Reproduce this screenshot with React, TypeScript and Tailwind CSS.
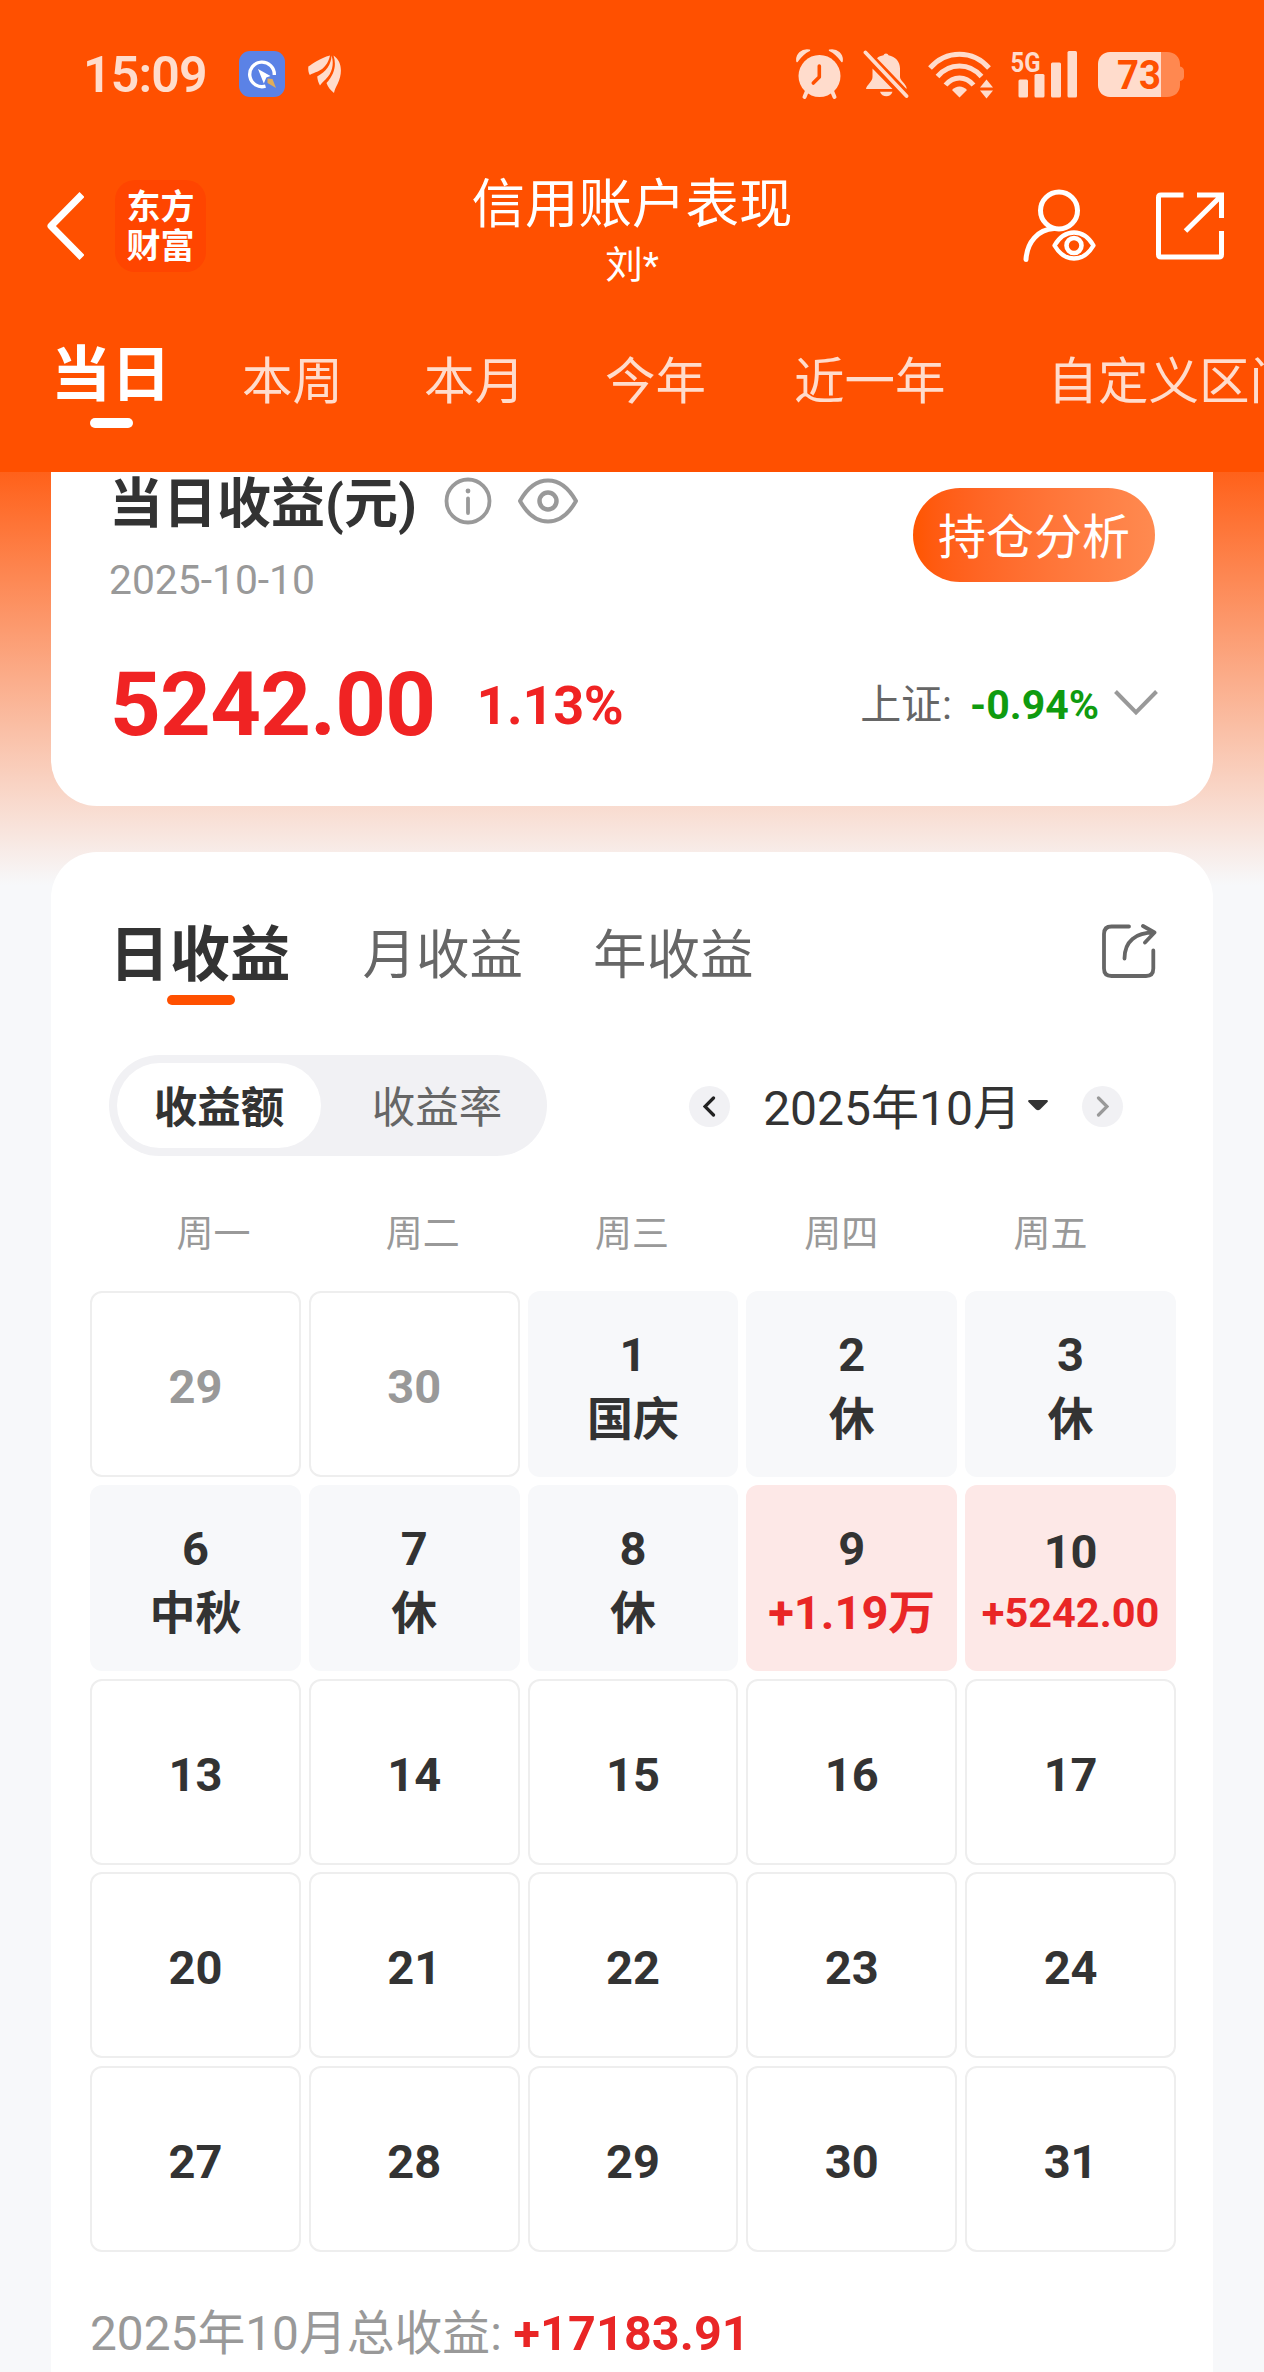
import clsx from "clsx";

type DayKind = "outside" | "normal" | "holiday" | "profit";

interface CalendarDay {
  day: number;
  kind: DayKind;
  label?: string;
}

const PERIOD_TABS = [
  { name: "本周", gap: "ml-[71px]" },
  { name: "本月", gap: "ml-[81px]" },
  { name: "今年", gap: "ml-[80px]" },
  { name: "近一年", gap: "ml-[88px]" },
  { name: "自定义区间", gap: "ml-[102px]" },
];

const WEEKDAYS = ["周一", "周二", "周三", "周四", "周五"];

const DAYS: CalendarDay[] = [
  { day: 29, kind: "outside" },
  { day: 30, kind: "outside" },
  { day: 1, kind: "holiday", label: "国庆" },
  { day: 2, kind: "holiday", label: "休" },
  { day: 3, kind: "holiday", label: "休" },
  { day: 6, kind: "holiday", label: "中秋" },
  { day: 7, kind: "holiday", label: "休" },
  { day: 8, kind: "holiday", label: "休" },
  { day: 9, kind: "profit", label: "+1.19万" },
  { day: 10, kind: "profit", label: "+5242.00" },
  ...[13, 14, 15, 16, 17, 20, 21, 22, 23, 24, 27, 28, 29, 30, 31].map(
    (day): CalendarDay => ({ day, kind: "normal" }),
  ),
];

function AlarmIcon() {
  return (
    <svg width="47" height="52" viewBox="0 0 47 52" fill="currentColor">
      <path d="M1 13.500C0 6 6 .8 13.500 2.200 8.500 4.500 4.500 8.500 1 13.500ZM46 13.500C47 6 41 .8 33.500 2.200c5 2.300 9 6.300 12.500 11.300Z" stroke="currentColor" strokeWidth="1.500" strokeLinejoin="round" />
      <circle cx="23.500" cy="28" r="21" />
      <path d="M11 43 8.500 49M36 43l2.500 6" stroke="currentColor" strokeWidth="4" strokeLinecap="round" />
      <path d="M23.300 18v11l-6 6" fill="none" stroke="#ff5000" strokeWidth="3.600" strokeLinecap="round" strokeLinejoin="round" />
    </svg>
  );
}

function MutedBellIcon() {
  return (
    <svg width="46" height="52" viewBox="0 0 46 52" fill="currentColor">
      {/* right half of the bell, cut along the slash */}
      <path d="M14 10.200c1.800-1.500 4-2.500 6.500-2.900a2.600 2.600 0 0 1 5 0C32.500 8.500 37 14 37 20.500V29c0 3.500 5.500 6.500 6.500 10.500V41Z" />
      <path d="M9.500 20.500V29c0 4.500-6 8-6.500 12H29.500L9.500 20.500Z" />
      <path d="M17 43.800h12.500c-1 3.200-3.500 4.500-6.200 4.500s-5.300-1.300-6.300-4.500Z" />
      <path d="M2.500 4.500 43.500 48" stroke="currentColor" strokeWidth="3.800" strokeLinecap="round" />
    </svg>
  );
}

function WifiIcon() {
  return (
    <svg width="65" height="52" viewBox="0 0 65 52" fill="none" stroke="currentColor" strokeWidth="5">
      <path d="M2 20C18 1.500 45 1.500 61 20M9.500 28.500c12-14 32-14 44 0M17.500 37c8-9.500 20-9.500 28 0" />
      <path d="M24 42c4-4.800 11-4.800 15 0l-7.500 7.500Z" fill="currentColor" stroke="none" />
      <path d="M58.500 31.500 65 39.500H52ZM58.500 50.500 65 42.500H52Z" fill="currentColor" stroke="none" />
    </svg>
  );
}

function SignalIcon() {
  return (
    <svg width="66" height="52" viewBox="0 0 66 52" fill="currentColor">
      <text x="-0.500" y="23.500" fontSize="28" fontWeight="700" textLength="30" lengthAdjust="spacingAndGlyphs">
        5G
      </text>
      <rect x="7.500" y="31.500" width="9.500" height="18" rx="1.500" />
      <rect x="23.500" y="26" width="10" height="23.500" rx="1.500" />
      <rect x="40" y="14.500" width="10" height="35" rx="1.500" />
      <rect x="56.500" y="3" width="9.500" height="46.500" rx="1.500" />
    </svg>
  );
}

function BatteryIcon() {
  return (
    <svg width="86" height="52" viewBox="0 0 86 52">
      <path d="M63 4h6c8 0 13 5 13 12v2.500c2.500.5 4 2 4 4.500v5.500c0 2.500-1.500 4-4 4.500V37c0 7-5 12-13 12h-6Z" fill="#ff8850" />
      <path d="M12 4h51v45H12C5 49 0 44 0 37V16C0 9 5 4 12 4Z" fill="currentColor" />
      <text x="19" y="41" fontSize="40" fontWeight="700" fill="#ff5000" textLength="44" lengthAdjust="spacingAndGlyphs">
        73
      </text>
    </svg>
  );
}

function BrowserBadge() {
  return (
    <svg width="46" height="46" viewBox="0 0 46 46" className="ml-[33px]">
      <rect width="46" height="46" rx="11" fill="#5b82e6" />
      <path d="M26.500 35.200A12.300 12.300 0 1 1 35.300 24" fill="none" stroke="#fff" strokeWidth="3.400" />
      <path d="m19 18 12.500 7-4.200 1.500-2.500 6Z" fill="#fff" />
      <path d="m28.500 27.500 5 .5 3.500 9-8.500-5Z" fill="#e0ad5b" />
    </svg>
  );
}

function WingIcon() {
  return (
    <svg width="34" height="40" viewBox="0 0 34 40" fill="currentColor" className="ml-[23px]">
      <path d="M22 1.500C12 4 4.500 10 .3 12.500c-.3 3.500.2 6.500 1.500 8.500 2-1.500 5-2.300 8-3.500C16 14.800 20.500 9 22 1.500Z" />
      <path d="M23.500 1.500c-.3 9.500-5.500 16-14.300 21 .3 3.500 1.400 6.500 2.800 9 1.300-2.300 3.300-3.800 5.500-6C24 19.500 26.500 10 23.500 1.500Z" />
      <path d="M25.500 1.500c3 9 1.300 18.500-7 27.500 1.300 3.800 4 7.300 7.500 10 .7-3.500 2-6 3.800-9.500C34.500 19.500 34.500 7.500 25.500 1.500Z" />
    </svg>
  );
}

function AccountIcon() {
  return (
    <svg width="74" height="74" viewBox="0 0 74 74" fill="none" stroke="currentColor" strokeWidth="5">
      <circle cx="36" cy="21.500" r="18.500" />
      <path d="M3 70.500C4 53 15 40.500 31 39.500" strokeLinecap="round" />
      <path d="M31.500 56.500c5-8.500 12-13 19.500-13s14.500 4.500 19.500 13C65.500 65 58.500 69.500 51 69.500S36.500 65 31.500 56.500Z" strokeWidth="4.300" strokeLinejoin="round" />
      <circle cx="51" cy="56.500" r="7.500" strokeWidth="4.600" />
    </svg>
  );
}

function OpenIcon() {
  return (
    <svg width="68" height="68" viewBox="0 0 68 68" fill="none" stroke="currentColor" strokeWidth="5">
      <path d="M27.500 3H5Q2.500 3 2.500 5.500V62.500Q2.500 65 5 65H63Q65.500 65 65.500 62.500V39M41 3H65.500V26M64 5 29.500 39" />
    </svg>
  );
}

function ShareIcon() {
  return (
    <svg width="55" height="55" viewBox="0 0 55 55" fill="none" stroke="#666" strokeWidth="3.800" strokeLinecap="round" strokeLinejoin="round">
      <path d="M27 2.500H9.500Q2 2.500 2 10V44.500Q2 52 9.500 52H44Q51.300 52 51.300 44.500V26.500" />
      <path d="M22.500 34.500C22.500 17 34 8.500 52 8.500M41 2 52.500 8.500 43 18.500" />
    </svg>
  );
}

function StatusBar() {
  return (
    <div className="flex h-[148px] items-center pr-20 pl-[83px] text-[#ffdccc]">
      <span className="w-[123px] pt-px text-[50px] leading-none font-semibold tracking-[-0.8px]">15:09</span>
      <BrowserBadge />
      <WingIcon />
      <div className="ml-auto flex">
        <AlarmIcon />
        <span className="w-5" />
        <MutedBellIcon />
        <span className="w-[19px]" />
        <WifiIcon />
        <span className="w-[18px]" />
        <SignalIcon />
        <span className="w-[21px]" />
        <BatteryIcon />
      </div>
    </div>
  );
}

function Header() {
  return (
    <header className="h-[472px] overflow-hidden bg-[#ff5000] text-white">
      <StatusBar />
      <div className="grid h-[154px] grid-cols-[1fr_auto_1fr] items-center">
        <div className="flex items-center pt-[2px] pl-[46px]">
          <svg width="38" height="68" viewBox="0 0 38 68" fill="none" stroke="currentColor" strokeWidth="7" strokeLinejoin="round">
            <path d="M36 2.500 5 34l31 31.500" />
          </svg>
          <div className="ml-[31px] flex h-[92px] w-[91px] flex-col items-center justify-center rounded-[20px] bg-[#ff4500] pt-[2px] text-[34px] leading-[39px] font-bold">
            <span>东方</span>
            <span>财富</span>
          </div>
        </div>
        <div className="flex flex-col items-center pt-[16px]">
          <h1 className="text-[53.5px] leading-[64px]">信用账户表现</h1>
          <span className="text-[37.5px] leading-[57px]">刘*</span>
        </div>
        <div className="flex items-center justify-end gap-[59px] pt-[2px] pr-10">
          <AccountIcon />
          <OpenIcon />
        </div>
      </div>
      <nav className="flex pl-[51px] whitespace-nowrap">
        <div className="flex shrink-0 flex-col items-center pt-[39px]">
          <span className="text-[60px] leading-[70px] font-bold">当日</span>
          <span className="mt-[7px] h-[10px] w-[43px] rounded-full bg-white" />
        </div>
        {PERIOD_TABS.map((tab) => (
          <span key={tab.name} className={clsx("shrink-0 pt-[45px] text-[50.5px] leading-[70px] text-[#ffdccc]", tab.gap)}>
            {tab.name}
          </span>
        ))}
      </nav>
    </header>
  );
}

function TodayCard() {
  return (
    <section className="rounded-b-[46px] bg-white pr-[55px] pb-[50px] pl-[58px]">
      <div className="flex items-start justify-between pt-[3px]">
        <div>
          <div className="flex items-center">
            <h2 className="text-[54px] leading-[60px] font-bold text-[#333]">当日收益(元)</h2>
            <svg width="48" height="48" viewBox="0 0 48 48" fill="none" stroke="#999" strokeWidth="3.800" strokeLinecap="round" className="-mt-[9px] ml-[27px]">
              <circle cx="24" cy="24" r="21.500" />
              <path d="M24 21.500V36" />
              <circle cx="24" cy="14" r="2.400" fill="#999" stroke="none" />
            </svg>
            <svg width="60" height="46" viewBox="0 0 60 46" fill="none" stroke="#999" strokeWidth="4" strokeLinejoin="round" className="-mt-[9px] ml-[26px]">
              <path d="M2 23C9 10.500 19 2.500 30 2.500S51 10.500 58 23C51 35.500 41 43.500 30 43.500S9 35.500 2 23Z" />
              <circle cx="30" cy="23" r="8.500" strokeWidth="4.500" />
            </svg>
          </div>
          <p className="mt-[21px] text-[40.800px] leading-[48px] text-[#999]">2025-10-10</p>
        </div>
        <button className="mt-[13px] mr-[3px] h-[94px] w-[242px] rounded-full bg-linear-to-r from-[#ff5500] to-[#ff8a50] pt-[6px] text-[48px] leading-none text-white">
          持仓分析
        </button>
      </div>
      <div className="mt-[51px] flex h-[101px] items-center">
        <span className="pl-px text-[88.500px] leading-none font-bold tracking-[-0.7px] text-[#f02323]">5242.00</span>
        <span className="ml-[41px] text-[54px] leading-none font-bold tracking-[-0.3px] text-[#f02323]">1.13%</span>
        <span className="ml-auto text-[41px] leading-none text-[#666]">上证:</span>
        <span className="ml-[18px] text-[41px] leading-none font-bold text-[#0f9b0f]">-0.94%</span>
        <svg width="44" height="26" viewBox="0 0 44 26" fill="none" stroke="#999" strokeWidth="4" className="-mt-[6px] ml-[15px]">
          <path d="m1.500 1.500 20.500 21 20.500-21" />
        </svg>
      </div>
    </section>
  );
}

function MonthArrow({ dir }: { dir: "prev" | "next" }) {
  const prev = dir === "prev";
  return (
    <button className="mt-[2px] flex h-[41px] w-[41px] items-center justify-center rounded-full bg-[#f1f1f4]">
      <svg width="13" height="21" viewBox="0 0 13 21" fill="none" stroke={prev ? "#222" : "#999"} strokeWidth="3.200" strokeLinecap="round">
        <path d={prev ? "M10.500 2 2 10.500l8.500 8.500" : "m2.500 2 8.500 8.500L2.500 19"} />
      </svg>
    </button>
  );
}

function DayCell({ day, kind, label }: CalendarDay) {
  const longLabel = (label?.length ?? 0) > 6;
  return (
    <div
      className={clsx(
        "flex h-[186px] flex-col items-center justify-center rounded-[12px] pt-[6px] text-[47px] font-bold text-[#333]",
        longLabel ? "leading-[61px]" : "leading-[64px]",
        kind === "holiday" && "bg-[#f7f8fa]",
        kind === "profit" && "bg-[#fde8e7]",
        (kind === "normal" || kind === "outside") && "border-2 border-[#eee]",
        kind === "outside" && "text-[#999]",
      )}
    >
      <span className={clsx(longLabel && "pt-[2px]")}>{day}</span>
      {label && (
        <span
          className={clsx(
            kind === "holiday" && "text-[46px]",
            kind === "profit" && "text-[#e92626]",
            longLabel && "text-[41.5px]",
          )}
        >
          {label}
        </span>
      )}
    </div>
  );
}

function CalendarCard() {
  return (
    <section className="mt-[46px] h-[1560px] rounded-t-[46px] bg-white">
      <div className="flex items-start pt-[68px] pr-[56px] pl-[58px] leading-[72px]">
        <div className="flex flex-col items-center">
          <span className="text-[60.500px] font-bold text-[#333]">日收益</span>
          <span className="mt-[3px] ml-[3px] h-[10px] w-[68px] rounded-full bg-[#ff5000]" />
        </div>
        <span className="ml-[72px] text-[53.5px] text-[#666]">月收益</span>
        <span className="ml-[70px] text-[53.5px] text-[#666]">年收益</span>
        <span className="mt-1 ml-auto">
          <ShareIcon />
        </span>
      </div>

      <div className="mt-[50px] flex items-center pr-[90px] pl-[58px]">
        <div className="flex h-[101px] w-[438px] rounded-full bg-[#f1f1f4] p-2 text-[43.5px] leading-[92px]">
          <span className="h-[85px] w-[204px] rounded-full bg-white text-center font-bold text-[#333]">收益额</span>
          <span className="h-[85px] flex-1 pl-3.5 text-center text-[#666]">收益率</span>
        </div>
        <div className="ml-auto flex items-center">
          <MonthArrow dir="prev" />
          <span className="mt-[6px] ml-[33px] text-[48px] leading-none text-[#333]">2025年10月</span>
          <svg width="20" height="11" viewBox="0 0 20 11" className="ml-[7px]">
            <path d="M1 0h18q1.500.8.500 2l-7.500 7.500q-2 1.500-4 0L.5 2Q-.5.800 1 0Z" fill="#333" />
          </svg>
          <span className="w-[34px]" />
          <MonthArrow dir="next" />
        </div>
      </div>

      <div className="mt-[55px] grid grid-cols-5 px-[58px] text-center text-[37px] leading-[48px] text-[#999]">
        {WEEKDAYS.map((name) => (
          <span key={name}>{name}</span>
        ))}
      </div>

      <div className="mt-8 grid grid-cols-5 gap-x-2 gap-y-[7.75px] pr-[37px] pl-[39px]">
        {DAYS.map((item, i) => (
          <DayCell key={i} {...item} />
        ))}
      </div>

      <p className="mt-[52px] pl-[39px] text-[47.8px] leading-[60px] text-[#999]">
        2025年10月总收益: <span className="text-[48.500px] font-bold tracking-[0.1px] text-[#e92626]">+17183.91</span>
      </p>
    </section>
  );
}

export default function App() {
  return (
    <div className="h-[2372px] w-[1264px] overflow-hidden bg-[#f7f8fa] font-['Roboto','Noto_Sans_CJK_SC',sans-serif]">
      <Header />
      <main className="bg-[linear-gradient(to_bottom,#ff611a_0,#f7f8fa_413px)] px-[51px]">
        <TodayCard />
        <CalendarCard />
      </main>
    </div>
  );
}
